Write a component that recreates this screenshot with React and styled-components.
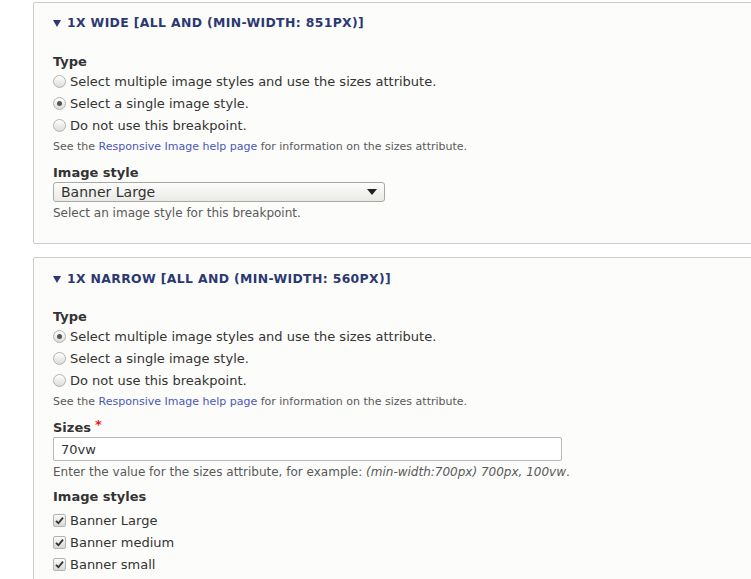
import styled, { createGlobalStyle } from "styled-components";

const GlobalStyle = createGlobalStyle`
  html, body {
    margin: 0;
    padding: 0;
    background: #ffffff;
    overflow: hidden;
  }
  body {
    font-family: "DejaVu Sans", "Liberation Sans", sans-serif;
    color: #333333;
  }
`;

const Page = styled.div`
  padding: 2px 0 0 33px;
  width: 760px;
`;

const Details = styled.section`
  border: 1px solid #cccccc;
  border-radius: 2px;
  background: #fcfcfa;
  margin-bottom: 13px;
  padding: 0 19px 22px;
`;

const Summary = styled.div`
  display: flex;
  align-items: center;
  gap: 6px;
  padding-top: ${(p) => (p.$narrow ? 13 : 12)}px;
  line-height: 16px;
  font-size: 12.4px;
  font-weight: bold;
  text-transform: uppercase;
  letter-spacing: 0.37px;
  color: #2b3872;
  margin-bottom: ${(p) => (p.$narrow ? 22 : 23)}px;
`;

const Caret = styled.span`
  width: 0;
  height: 0;
  border-left: 4px solid transparent;
  border-right: 4px solid transparent;
  border-top: 7px solid #2b3872;
`;

const Label = styled.div`
  font-size: 13px;
  font-weight: bold;
  line-height: 16px;
  margin-top: ${(p) => p.$gap || 0}px;
  color: #333333;
`;

const Required = styled.span`
  color: #e41d1d;
  margin-left: 4px;
  position: relative;
  top: -3px;
`;

const OptionRow = styled.label`
  display: flex;
  align-items: center;
  gap: 4px;
  height: 22px;
  font-size: 13px;
  color: #333333;
`;

const Radio = styled.span`
  width: 11px;
  height: 11px;
  border-radius: 50%;
  border: 1px solid #b3b3b3;
  background: linear-gradient(#ffffff, #dcdcdc);
  display: flex;
  align-items: center;
  justify-content: center;

  &::after {
    content: "";
    width: 5px;
    height: 5px;
    border-radius: 50%;
    background: ${(p) => (p.$checked ? "#555555" : "transparent")};
  }
`;

const Checkbox = styled.span`
  width: 11px;
  height: 11px;
  border-radius: 2px;
  border: 1px solid #b3b3b3;
  background: linear-gradient(#fafafa, #d8d8d8);
  display: flex;
  align-items: center;
  justify-content: center;
`;

const Help = styled.div`
  font-size: 11px;
  line-height: 16px;
  margin-top: 3px;
  color: #595959;

  a {
    color: #4a57b8;
    text-decoration: none;
  }
`;

const Description = styled.div`
  font-size: 12px;
  line-height: 16px;
  margin-top: ${(p) => p.$gap || 2}px;
  color: #595959;

  em {
    font-style: italic;
  }
`;

const SelectBox = styled.div`
  margin-top: 1px;
  width: 330px;
  height: 18px;
  box-sizing: content-box;
  border: 1px solid #a8a8a8;
  border-radius: 3px;
  background: linear-gradient(#fdfdfc, #e9e9e5);
  display: flex;
  align-items: center;
  justify-content: space-between;
  font-size: 14px;
  color: #333333;

  span {
    padding-left: 7px;
  }

  &::after {
    content: "";
    margin-right: 7px;
    border-left: 5px solid transparent;
    border-right: 5px solid transparent;
    border-top: 6px solid #222222;
  }
`;

const TextInput = styled.div`
  margin-top: 1px;
  width: 500px;
  height: 22px;
  border: 1px solid #b8b8b8;
  border-radius: 2px;
  background: #ffffff;
  display: flex;
  align-items: center;
  padding-left: 7px;
  font-size: 13px;
  color: #333333;
`;

const Options = styled.div`
  margin-top: ${(p) => p.$gap || 0}px;
`;

const Check = () => (
  <svg width="9" height="9" viewBox="0 0 9 9">
    <path d="M1 4.8 L3.4 7.2 L8 1.6" fill="none" stroke="#333" strokeWidth="1.8" />
  </svg>
);

const HelpLine = () => (
  <Help>
    See the <a href="#help">Responsive Image help page</a> for information on the sizes attribute.
  </Help>
);

const typeOptions = [
  "Select multiple image styles and use the sizes attribute.",
  "Select a single image style.",
  "Do not use this breakpoint.",
];

const TypeGroup = ({ selected }) => (
  <>
    <Label>Type</Label>
    {typeOptions.map((text, i) => (
      <OptionRow key={text}>
        <Radio $checked={i === selected} />
        {text}
      </OptionRow>
    ))}
  </>
);

const imageStyles = ["Banner Large", "Banner medium", "Banner small", ""];

export default function App() {
  return (
    <Page>
      <GlobalStyle />
      <Details>
        <Summary>
          <Caret />
          1x Wide [all and (min-width: 851px)]
        </Summary>
        <TypeGroup selected={1} />
        <HelpLine />
        <Label $gap={10}>Image style</Label>
        <SelectBox>
          <span>Banner Large</span>
        </SelectBox>
        <Description $gap={3}>Select an image style for this breakpoint.</Description>
      </Details>

      <Details>
        <Summary $narrow>
          <Caret />
          1x Narrow [all and (min-width: 560px)]
        </Summary>
        <TypeGroup selected={0} />
        <HelpLine />
        <Label $gap={10}>
          Sizes<Required>*</Required>
        </Label>
        <TextInput>70vw</TextInput>
        <Description $gap={3}>
          Enter the value for the sizes attribute, for example: <em>(min-width:700px) 700px, 100vw</em>.
        </Description>
        <Label $gap={9}>Image styles</Label>
        <Options $gap={4}>
          {imageStyles.map((s, i) => (
            <OptionRow key={i}>
              <Checkbox>
                <Check />
              </Checkbox>
              {s}
            </OptionRow>
          ))}
        </Options>
      </Details>
    </Page>
  );
}
